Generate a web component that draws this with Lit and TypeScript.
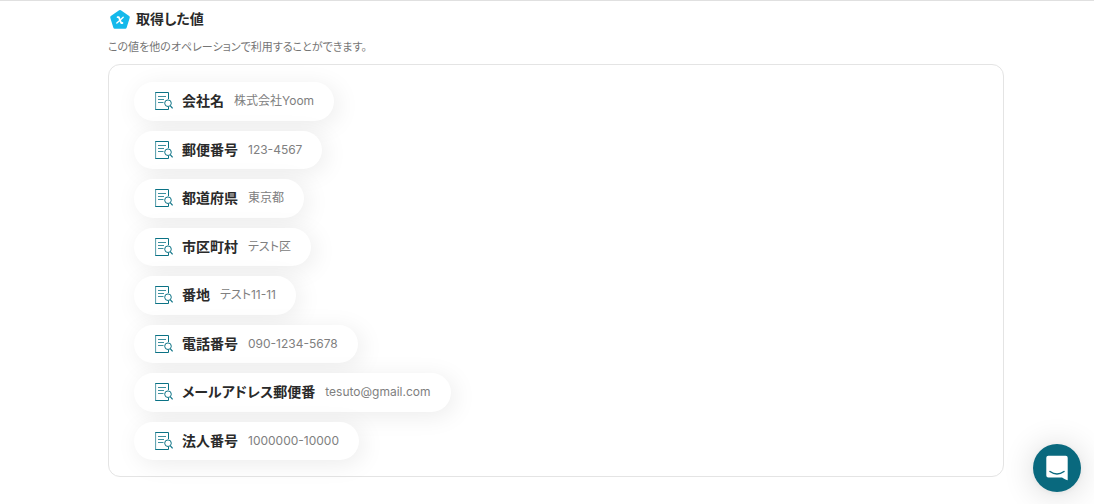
import { LitElement, html, css, svg } from "lit";
import { customElement, property } from "lit/decorators.js";

interface Item {
  label: string;
  value: string;
}

const ITEMS: Item[] = [
  { label: "会社名", value: "株式会社Yoom" },
  { label: "郵便番号", value: "123-4567" },
  { label: "都道府県", value: "東京都" },
  { label: "市区町村", value: "テスト区" },
  { label: "番地", value: "テスト11-11" },
  { label: "電話番号", value: "090-1234-5678" },
  { label: "メールアドレス郵便番", value: "tesuto@gmail.com" },
  { label: "法人番号", value: "1000000-10000" },
];

const documentSearch = svg`
  <path d="M14.500 8V1.500H1.500M1.500 18.500H14.500V16" />
  <path d="M1.600 1V19" stroke-width="0.700" />
  <path d="M4 5.500H12M4 8.500H10M4 11.500H9.500" stroke-width="0.800" />
  <circle cx="14" cy="12.200" r="3.300" />
  <path d="M16.400 14.800L18.600 17.400" stroke-width="1.200" />
`;

@customElement("value-pill")
export class ValuePill extends LitElement {
  @property() label = "";
  @property() value = "";

  static styles = css`
    :host {
      display: flex;
      align-items: center;
      gap: 8px;
      box-sizing: border-box;
      height: 100%;
      padding: 8px 20px;
      border-radius: 24px;
      background: #fff;
      box-shadow: 4px 4px 24px rgba(0, 0, 0, 0.08);
    }
    .icon {
      flex: none;
      width: 20px;
      height: 20px;
      fill: none;
      stroke: #0b7285;
    }
    .label {
      color: #2a2a2a;
      font-size: 14px;
      line-height: 22px;
      font-weight: 600;
    }
    .value {
      margin-left: 2px;
      color: #808080;
      font-size: 12px;
      line-height: 22px;
    }
  `;

  render() {
    return html`
      <svg class="icon" viewBox="0 0 20 20" aria-hidden="true">${documentSearch}</svg>
      <span class="label">${this.label}</span>
      <span class="value">${this.value}</span>
    `;
  }
}

@customElement("app-root")
export class AppRoot extends LitElement {
  static styles = css`
    :host {
      display: block;
      box-sizing: border-box;
      min-height: 100vh;
      border-top: 1px solid #e0e0e0;
      background: #fff;
      font-family: Inter, "Noto Sans CJK JP", sans-serif;
      font-feature-settings: "palt";
    }
    .panel {
      margin: 0 90px 0 108px;
      padding: 6px 0 27px;
    }
    .heading {
      display: flex;
      align-items: center;
      gap: 4px;
    }
    .badge {
      width: 24px;
      height: 24px;
    }
    .title {
      margin: 0;
      color: #2a2a2a;
      font-size: 14px;
      line-height: 22px;
      font-weight: 600;
    }
    .note {
      margin: 7px 0 8px;
      color: #757575;
      font-size: 11px;
      line-height: 18px;
    }
    .box {
      padding: 17px 25px 16px;
      border: 1px solid #e4e4e4;
      border-radius: 12px;
    }
    .list {
      display: grid;
      grid-auto-rows: 1fr;
      justify-items: start;
      gap: 10px;
      min-height: 378px;
      margin: 0;
      padding: 0;
      list-style: none;
    }
    .chat {
      position: fixed;
      right: 13px;
      bottom: 12px;
      display: grid;
      place-items: center;
      width: 48px;
      height: 48px;
      padding: 0;
      border: 0;
      border-radius: 50%;
      background: #09697e;
      box-shadow: 0 1px 6px rgba(0, 0, 0, 0.06), 0 2px 32px rgba(0, 0, 0, 0.16);
      cursor: pointer;
    }
    .bubble {
      width: 24px;
      height: 26px;
    }
  `;

  render() {
    return html`
      <main class="panel">
        <header class="heading">
          <svg class="badge" viewBox="0 0 24 24" aria-hidden="true">
            <path
              d="M12 4.500L20.300 10.300L17.200 20.300H6.800L3.700 10.300Z"
              fill="#14b9eb"
              stroke="#14b9eb"
              stroke-width="3"
              stroke-linejoin="round"
            />
            <path d="M9.600 10.200H10.800L13.200 16H14.400" fill="none" stroke="#fff" stroke-width="1.800" stroke-linecap="round" stroke-linejoin="round" />
            <path d="M15.200 10.200L12 13.200L8.800 16" fill="none" stroke="#fff" stroke-width="1.400" stroke-linecap="round" />
          </svg>
          <h1 class="title">取得した値</h1>
        </header>
        <p class="note">この値を他のオペレーションで利用することができます。</p>
        <section class="box">
          <ul class="list">
            ${ITEMS.map(
              (item) => html`<li><value-pill .label=${item.label} .value=${item.value}></value-pill></li>`
            )}
          </ul>
        </section>
      </main>
      <button class="chat" type="button" aria-label="チャットを開く">
        <svg class="bubble" viewBox="0 0 24 26" aria-hidden="true">
          <path
            d="M3.300 0.800H20.700Q22.700 0.800 22.700 2.800V25.200C20.500 24.600 18.500 23.500 17 22.500H3.300Q1.300 22.500 1.300 20.500V2.800Q1.300 0.800 3.300 0.800Z"
            fill="#fff"
          />
          <path
            d="M5 16.500Q12 21.500 19 16.500"
            fill="none"
            stroke="#09697e"
            stroke-width="1.500"
            stroke-linecap="round"
          />
        </svg>
      </button>
    `;
  }
}
